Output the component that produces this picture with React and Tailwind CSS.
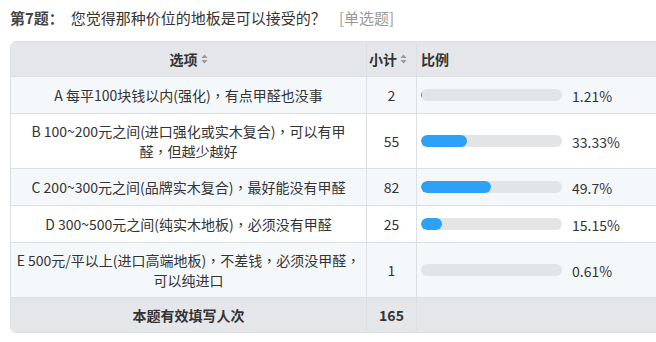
import React from 'react';

const rows = [
  { lines: ['A 每平100块钱以内(强化)，有点甲醛也没事'], count: 2, pct: 1.21, label: '1.21%', bg: 'bg-[#f5f8fb]' },
  { lines: ['B 100~200元之间(进口强化或实木复合)，可以有甲', '醛，但越少越好'], count: 55, pct: 33.33, label: '33.33%', bg: 'bg-white' },
  { lines: ['C 200~300元之间(品牌实木复合)，最好能没有甲醛'], count: 82, pct: 49.7, label: '49.7%', bg: 'bg-[#f5f8fb]' },
  { lines: ['D 300~500元之间(纯实木地板)，必须没有甲醛'], count: 25, pct: 15.15, label: '15.15%', bg: 'bg-white' },
  { lines: ['E 500元/平以上(进口高端地板)，不差钱，必须没甲醛，', '可以纯进口'], count: 1, pct: 0.61, label: '0.61%', bg: 'bg-[#f5f8fb]' },
];

// fullwidth commas sit centred in the reference, TC glyphs do that
const withCommas = (text) =>
  text.split('，').map((part, i, arr) => (
    <React.Fragment key={i}>
      {part}
      {i < arr.length - 1 && <span style={{ fontFamily: '"Noto Sans CJK TC", sans-serif' }}>，</span>}
    </React.Fragment>
  ));

const SortIcon = () => (
  <svg width="7" height="10" viewBox="0 0 7 10" className="ml-[3px] inline-block">
    <path d="M3.5 0.5 L6.5 4 L0.5 4 Z" fill="#9a9a9a" />
    <path d="M3.5 9.5 L6.5 6 L0.5 6 Z" fill="#9a9a9a" />
  </svg>
);

const Bar = ({ pct }) => (
  <div className="w-[141px] h-[12px] rounded-full bg-[#e3e4e6] overflow-hidden">
    <div className="h-full rounded-full bg-[#2ba1f7]" style={{ width: `${Math.floor(pct * 1.41)}px` }} />
  </div>
);

export default function App() {
  return (
    <div
      className="w-full h-[342px] overflow-hidden bg-white text-[#333] text-[14px] leading-[20px]"
      style={{ fontFamily: '"Noto Sans CJK SC", "Noto Sans", sans-serif' }}
    >
      <div className="pt-[8px] pl-[10px] flex items-center whitespace-nowrap text-[15px]">
        <span className="font-bold text-[#444]">第7题：</span>
        <span className="ml-[7px]">您觉得那种价位的地板是可以接受的？</span>
        <span className="ml-[13px] text-[#999]">[单选题]</span>
      </div>

      <div className="ml-[10px] mt-[13px] w-[680px] border border-[#dcdfe3] rounded-[6px] overflow-hidden">
        <div className="flex h-[35px] bg-[#e4e6ea] border-b border-[#dcdfe3] font-bold">
          <div className="w-[356px] border-r border-[#dcdfe3] flex items-center justify-center">
            选项<SortIcon />
          </div>
          <div className="w-[50px] border-r border-[#dcdfe3] flex items-center pl-[2px]">
            小计<SortIcon />
          </div>
          <div className="flex-1 flex items-center pl-[4px]">比例</div>
        </div>

        {rows.map((r) => (
          <div key={r.label} className={`flex border-b border-[#dcdfe3] ${r.bg}`}>
            <div className="w-[356px] border-r border-[#dcdfe3] min-h-[36px] py-[7px] flex flex-col items-center justify-center text-center whitespace-nowrap">
              {r.lines.map((l) => (
                <span key={l}>{withCommas(l)}</span>
              ))}
            </div>
            <div className="w-[50px] border-r border-[#dcdfe3] flex items-center justify-center">{r.count}</div>
            <div className="flex-1 flex items-center pl-[4px]">
              <Bar pct={r.pct} />
              <span className="ml-[10px] mt-[2px]">{r.label}</span>
            </div>
          </div>
        ))}

        <div className="flex h-[34px] bg-[#e4e6ea] font-bold">
          <div className="w-[356px] border-r border-[#dcdfe3] flex items-center justify-center">本题有效填写人次</div>
          <div className="w-[50px] border-r border-[#dcdfe3] flex items-center justify-center">165</div>
          <div className="flex-1" />
        </div>
      </div>
    </div>
  );
}
